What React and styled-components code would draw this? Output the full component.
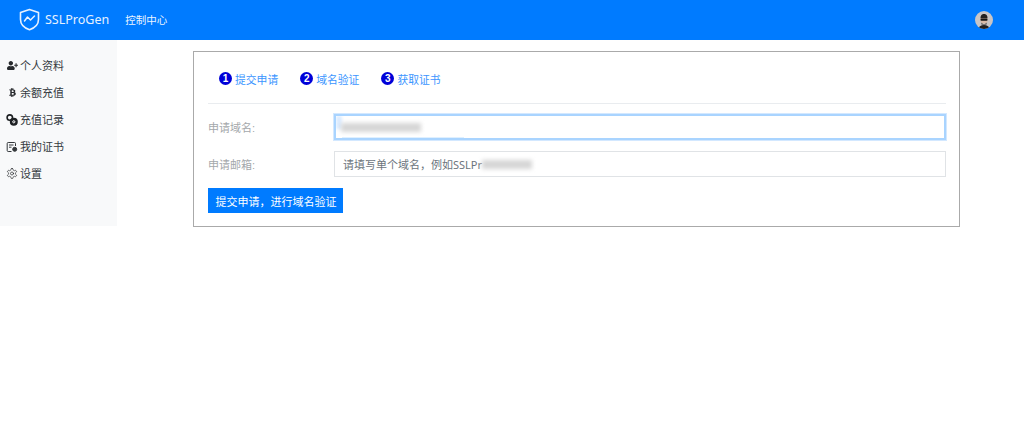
import React from 'react';
import styled, { createGlobalStyle } from 'styled-components';
import { FaUserPlus, FaBtc } from 'react-icons/fa';
import { LuSettings } from 'react-icons/lu';

const Global = createGlobalStyle`
  html, body { margin: 0; padding: 0; background: #fff; }
  body { font-family: "Liberation Sans", "Noto Sans CJK SC", sans-serif; font-size: 12px; color: #343a40; }
`;
const Header = styled.header`
  height: 40px; background: #007bff; display: flex; align-items: center;
  padding: 0 31px 0 19px; color: #fff;
`;
const Brand = styled.div`
  display: flex; align-items: center; gap: 5px; font-family: "Noto Sans", sans-serif;
  font-size: 12.5px; color: #e6f1ff; margin-top: -1px;
`;
const NavLink = styled.a`margin-left: 16px; font-size: 10.5px; color: #eaf4ff; margin-top: -1px;`;
const Avatar = styled.div`
  margin-left: auto; width: 18px; height: 18px; border-radius: 50%; background: #c9c5c5;
  overflow: hidden; display: flex;
`;
const Body = styled.div`display: flex; align-items: flex-start;`;
const Side = styled.nav`
  width: 117px; height: 186px; background: #f8f9fa; padding-top: 12px; box-sizing: border-box; flex: none;
`;
const SideItem = styled.div`
  height: 27px; display: flex; align-items: center; padding-left: 6px; gap: 2px;
  font-size: 11px; line-height: 26px; color: #343a40;
`;
const IconBox = styled.span`width: 12px; height: 12px; display: flex; align-items: center; justify-content: center; color: #26292c; flex: none;`;
const Card = styled.section`
  margin: 11px 0 0 76px; width: 767px; height: 176px; box-sizing: border-box;
  border: 1px solid #aaa; padding: 0 13px 0 14px;
`;
const Steps = styled.div`
  height: 49px; display: flex; align-items: center; gap: 22px; padding: 2px 0 0 11px;
  border-bottom: 1px solid #e9ecef;
`;
const Step = styled.div`display: flex; align-items: center; gap: 3px; color: #3b95ff; font-size: 10.8px;`;
const Num = styled.span`
  width: 13px; height: 13px; border-radius: 50%; background: #0000d8; color: #fff;
  font: bold 10px/13px "Liberation Sans", sans-serif; text-align: center;
`;
const Row = styled.div`display: flex; align-items: center; margin-top: ${p => p.$top}px;`;
const Label = styled.label`width: 126px; flex: none; color: #a4a8ab; font-size: 11px;`;
const Field = styled.div`
  flex: 1; height: 26px; box-sizing: border-box; display: flex; align-items: center;
  position: relative; padding-left: ${p => p.$focus ? 5 : 8}px; overflow: hidden;
  border: ${p => p.$focus ? '2px solid #a9d4ff' : '1px solid #e0e3e6'};
  ${p => p.$focus ? 'outline: 1px solid #d3e8ff;' : ''}
  font-family: "Noto Sans", "Noto Sans CJK SC", sans-serif;
  font-size: 11px; color: #6c757d;
`;
const Smear = styled.span`
  display: inline-block; width: ${p => p.$w}px; height: 9px; background: #d6d6d6; filter: blur(2px);
  margin-top: 1px;
`;
const Edge = styled.span`
  position: absolute; left: 0; top: 0; width: 6px; height: 13px; background: #dcecff; filter: blur(1.5px);
`;
const Underline = styled.span`
  position: absolute; left: 6px; bottom: 0; width: 122px; height: 1px; background: #dff0ff;
`;
const Submit = styled.button`
  display: block; margin-top: 11px; width: 135px; height: 25px; border: 0; padding: 0 0 0 1px;
  background: #007bff; color: #fff; font: 11px "Liberation Sans", "Noto Sans CJK SC", sans-serif;
`;

const Logo = () => (
  <svg width="21" height="23" viewBox="0 0 21 23" fill="none" stroke="#e6f1ff" strokeWidth="1.6" strokeLinejoin="round" strokeLinecap="round">
    <path d="M10.5 1.5 19.5 4.5V11.5C19.5 16.5 15.5 20 10.5 21.7 5.5 20 1.5 16.5 1.5 11.5V4.5Z" />
    <path d="M5.5 13 8.5 9 11.5 12 15.5 8" strokeWidth="1.5" />
  </svg>
);
const Coins = () => (
  <svg width="12" height="12" viewBox="0 0 12 12" fill="none" stroke="#1d2023" strokeWidth="1.6">
    <circle cx="3.8" cy="3.6" r="2.7" />
    <circle cx="7.8" cy="7.8" r="3.2" fill="#1d2023" />
    <circle cx="7.8" cy="7.8" r="1.1" stroke="#f8f9fa" strokeWidth="1" />
  </svg>
);
const Cert = () => (
  <svg width="12" height="12" viewBox="0 0 12 12" fill="none" stroke="#33373a" strokeWidth="1">
    <path d="M5.5 10.5H2.2a1 1 0 0 1-1-1V2.5a1 1 0 0 1 1-1h6.3a1 1 0 0 1 1 1V5" />
    <path d="M3 4h4.5M3 6.2h2.5" />
    <circle cx="8.7" cy="8.3" r="2" fill="#33373a" />
  </svg>
);
const Face = () => (
  <svg width="18" height="18" viewBox="0 0 18 18">
    <path d="M3.5 18c.5-3 2.5-4 5.5-4s5 1 5.5 4z" fill="#23201f" />
    <circle cx="9" cy="9" r="3.5" fill="#d8b9a5" />
    <path d="M5.5 7.5C5.5 4 7 3 9 3s3.5 1 3.5 4.5z" fill="#23201f" />
    <rect x="5.5" y="7.8" width="7" height="2" rx=".8" fill="#151515" />
    <path d="M6.5 11.5c1 2 4 2 5 0v2h-5z" fill="#2b2523" />
  </svg>
);

const menu = [
  [<FaUserPlus size={11} />, '个人资料'],
  [<FaBtc size={9} />, '余额充值'],
  [<Coins />, '充值记录'],
  [<Cert />, '我的证书'],
  [<LuSettings size={13} strokeWidth={1.4} />, '设置'],
];

export default function App() {
  return (
    <>
      <Global />
      <Header>
        <Brand><Logo />SSLProGen</Brand>
        <NavLink>控制中心</NavLink>
        <Avatar><Face /></Avatar>
      </Header>
      <Body>
        <Side>
          {menu.map(([icon, text]) => (
            <SideItem key={text}><IconBox>{icon}</IconBox>{text}</SideItem>
          ))}
        </Side>
        <Card>
          <Steps>
            <Step><Num>1</Num>提交申请</Step>
            <Step><Num>2</Num>域名验证</Step>
            <Step><Num>3</Num>获取证书</Step>
          </Steps>
          <Row $top={10}>
            <Label>申请域名:</Label>
            <Field $focus><Edge /><Smear $w={80} /><Underline /></Field>
          </Row>
          <Row $top={11}>
            <Label>申请邮箱:</Label>
            <Field>请填写单个域名，例如SSLPr<Smear $w={50} /></Field>
          </Row>
          <Submit>提交申请，进行域名验证</Submit>
        </Card>
      </Body>
    </>
  );
}
